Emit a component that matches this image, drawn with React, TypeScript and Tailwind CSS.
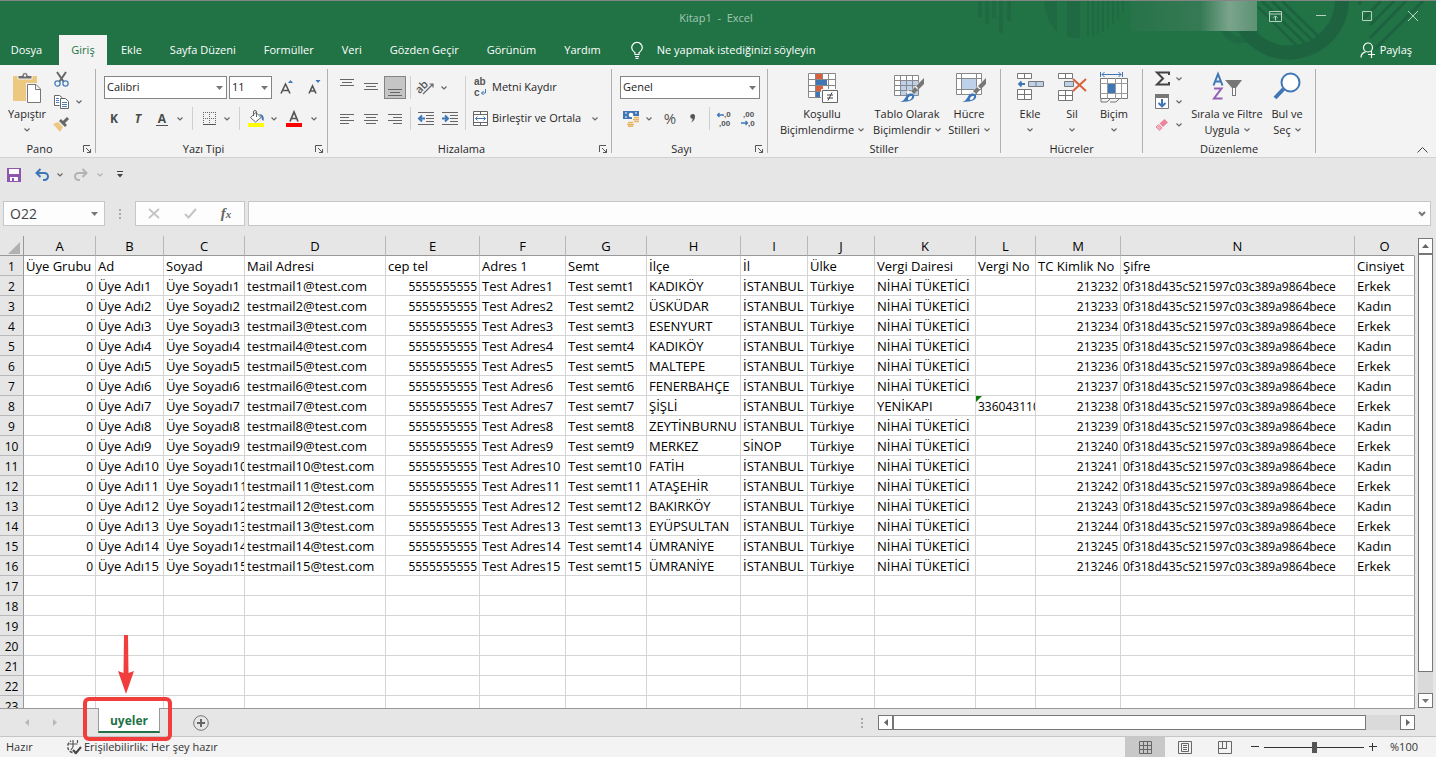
import type { ReactNode } from 'react';

const tabs = ['Ekle', 'Sayfa Düzeni', 'Formüller', 'Veri', 'Gözden Geçir', 'Görünüm', 'Yardım'];

const columns = [
  { letter: 'A', width: 'w-[72px]' },
  { letter: 'B', width: 'w-[68px]' },
  { letter: 'C', width: 'w-[81px]' },
  { letter: 'D', width: 'w-[141px]' },
  { letter: 'E', width: 'w-[94px]' },
  { letter: 'F', width: 'w-[86px]' },
  { letter: 'G', width: 'w-[81px]' },
  { letter: 'H', width: 'w-[94px]' },
  { letter: 'I', width: 'w-[67px]' },
  { letter: 'J', width: 'w-[67px]' },
  { letter: 'K', width: 'w-[101px]' },
  { letter: 'L', width: 'w-[60px]' },
  { letter: 'M', width: 'w-[85px]' },
  { letter: 'N', width: 'w-[234px]' },
  { letter: 'O', width: 'w-[60px]' },
];

const titles = [
  'Üye Grubu', 'Ad', 'Soyad', 'Mail Adresi', 'cep tel', 'Adres 1', 'Semt', 'İlçe', 'İl', 'Ülke',
  'Vergi Dairesi', 'Vergi No', 'TC Kimlik No', 'Şifre', 'Cinsiyet',
];

const districts = [
  'KADIKÖY', 'ÜSKÜDAR', 'ESENYURT', 'KADIKÖY', 'MALTEPE', 'FENERBAHÇE', 'ŞİŞLİ', 'ZEYTİNBURNU',
  'MERKEZ', 'FATİH', 'ATAŞEHİR', 'BAKIRKÖY', 'EYÜPSULTAN', 'ÜMRANİYE', 'ÜMRANİYE',
];

const members = districts.map((district, i) => {
  const n = i + 1;
  return [
    '0',
    `Üye Adı${n}`,
    `Üye Soyadı${n}`,
    `testmail${n}@test.com`,
    '5555555555',
    `Test Adres${n}`,
    `Test semt${n}`,
    district,
    district === 'MERKEZ' ? 'SİNOP' : 'İSTANBUL',
    'Türkiye',
    n === 7 ? 'YENİKAPI' : 'NİHAİ TÜKETİCİ',
    n === 7 ? '3360431101' : '',
    String(213231 + n),
    '0f318d435c521597c03c389a9864bece',
    n % 2 ? 'Erkek' : 'Kadın',
  ];
});

const rows = [titles, ...members, ...Array.from({ length: 7 }, () => titles.map(() => ''))];

function cellStyle(row: number, col: number) {
  if (row === 0) return 'text-[13px] text-left';
  if (col === 0 || col === 4 || col === 12) return 'text-[12px] text-right';
  if (col === 11 || col === 13) return 'text-[12px] text-left';
  return 'text-[13px] text-left';
}

function Svg({ w, h, children }: { w: number; h: number; children: ReactNode }) {
  return (
    <svg width={w} height={h} viewBox={`0 0 ${w} ${h}`} fill="none" className="shrink-0 overflow-visible" aria-hidden="true">
      {children}
    </svg>
  );
}

function Chevron({ color = '#666' }: { color?: string }) {
  return (
    <Svg w={6} h={4}>
      <path d="M.5.5L3 3 5.500.5" stroke={color} strokeWidth="1.200" />
    </Svg>
  );
}

function Triangle() {
  return (
    <Svg w={7} h={4}>
      <path d="M0 0h7L3.5 4z" fill="#777" />
    </Svg>
  );
}

function DropButton({ label }: { label: string }) {
  return (
    <button aria-label={label} className="flex h-full w-3 items-center justify-center">
      <Chevron />
    </button>
  );
}

function Tool({ label, width = 'w-6', children }: { label: string; width?: string; children: ReactNode }) {
  return (
    <button aria-label={label} className={`flex h-full shrink-0 items-center justify-center ${width}`}>
      {children}
    </button>
  );
}

function BigButton({ width, icon, line1, line2 }: { width: string; icon: ReactNode; line1: string; line2?: string }) {
  return (
    <button className={`flex shrink-0 flex-col items-center whitespace-nowrap leading-4 ${width}`}>
      <span className="flex h-8 items-start justify-center">{icon}</span>
      <span className="mt-0.5">{line1}</span>
      <span className="flex h-4 items-center gap-1">
        {line2}
        <Chevron />
      </span>
    </button>
  );
}

function Group({ name, width, launcher, children }: { name: string; width: string; launcher?: boolean; children: ReactNode }) {
  return (
    <>
      <section aria-label={name} className={`flex shrink-0 flex-col justify-between ${width}`}>
        {children}
        <div className="flex h-4 items-center">
          <span className="flex-1 text-center leading-4">{name}</span>
          {launcher && (
            <button aria-label={`${name} ayarları`} className="flex w-4 justify-center">
              <Svg w={9} h={9}>
                <path d="M.5 7V.5H7M3 3l4.5 4.500M7.500 4v3.500H4" stroke="#555" />
              </Svg>
            </button>
          )}
        </div>
      </section>
      <div className="mt-1 h-[84px] w-px shrink-0 bg-[#b1b1b1]" />
    </>
  );
}

function Divider({ className }: { className: string }) {
  return <div className={`w-px shrink-0 self-stretch bg-[#d0d0d0] ${className}`} />;
}

function Lines({ y, widths, align }: { y: number; widths: number[]; align: 'left' | 'center' | 'right' }) {
  return (
    <Svg w={15} h={20}>
      {widths.map((w, i) => {
        const x = align === 'left' ? 0 : align === 'right' ? 14 - w : (14 - w) / 2;
        return <rect key={i} x={x} y={y + i * 3} width={w} height="1" fill="#666" />;
      })}
    </Svg>
  );
}

function TitleArt() {
  return (
    <svg
      width="476"
      height="64"
      viewBox="0 1 476 64"
      fill="none"
      aria-hidden="true"
      className="pointer-events-none absolute top-0 right-0"
    >
      <g fill="#1f6a43">
        <path d="M18 1h4v16h-4zM25 1h4v23h-4zM32 1h4v17h-4zM39 1h4v32h-4zM47 1h4v20h-4z" />
        <path d="M84 1h13v31c-7-7-12-18-13-31zM107 1h13v37c-5 0-9-1-13-2zM127 1h2v36h-2zM132 1h2v35h-2zM137 1h2v33h-2zM142 1h2v31h-2zM147 1h2v27h-2zM152 1h2v23h-2zM157 1h2v18h-2zM162 1h2v13h-2z" />
      </g>
      <path d="M265 30a17 17 0 0 0 31 0" stroke="#1f6a43" strokeWidth="7" />
      <path d="M281 22a53 53 0 0 0 101-21" stroke="#1e6340" strokeWidth="14" />
      <path
        d="M298 7l40 40M302 1l45 44M312 1l41 40M322 1l36 35M401 1l-2 4M421 1l-18 18M434 1l-24 24M446 1l-36 37M463 1l-48 48"
        stroke="#1e6340"
        strokeWidth="3"
      />
      <defs>
        <linearGradient id="account" x1="171" x2="297" y1="0" y2="0" gradientUnits="userSpaceOnUse">
          <stop offset="0" stopColor="#27734a" />
          <stop offset=".55" stopColor="#357a54" />
          <stop offset=".78" stopColor="#7aa48c" />
          <stop offset="1" stopColor="#5c9274" />
        </linearGradient>
      </defs>
      <rect x="171" y="1" width="126" height="30" fill="url(#account)" />
    </svg>
  );
}

function TitleBar() {
  return (
    <header className="relative shrink-0 border-t border-[#848484] bg-[#217346] text-white">
      <TitleArt />
      <div className="relative flex h-[34px] items-start">
        <div className="w-[180px] shrink-0" />
        <h1 className="flex-1 self-center text-center whitespace-pre text-[#a3c7b1]">{'Kitap1  -  Excel'}</h1>
        <div className="flex h-[30px] text-[#b5d1c0]">
          <Tool label="Şerit Görüntüleme Seçenekleri" width="w-[46px]">
            <Svg w={13} h={11}>
              <path d="M.5.5h12v10H.5zM.5 3h12M6.5 9.500V5M4.500 6.800l2-2 2 2" stroke="currentColor" />
            </Svg>
          </Tool>
          <Tool label="Simge Durumuna Küçült" width="w-[46px]">
            <Svg w={10} h={10}>
              <path d="M0 4.500h10" stroke="currentColor" />
            </Svg>
          </Tool>
          <Tool label="Ekranı Kapla" width="w-[46px]">
            <Svg w={10} h={10}>
              <path d="M.5.5h9v9h-9z" stroke="currentColor" />
            </Svg>
          </Tool>
          <Tool label="Kapat" width="w-[46px]">
            <Svg w={10} h={10}>
              <path d="M0 0l10 10M10 0L0 10" stroke="currentColor" />
            </Svg>
          </Tool>
        </div>
      </div>
      <nav className="relative flex h-[30px] items-stretch">
        <button className="w-[59px] shrink-0 pr-1.5">Dosya</button>
        <button className="w-12 shrink-0 bg-[#f3f3f3] text-[#217346]">Giriş</button>
        {tabs.map((tab) => (
          <button key={tab} className="shrink-0 px-[14px] whitespace-nowrap">
            {tab}
          </button>
        ))}
        <label className="ml-4 flex flex-1 items-center gap-3.5">
          <Svg w={12} h={17}>
            <path d="M4 12.500v-1.700C2.500 9.600.7 8.300.7 5.700a5.300 5.300 0 0 1 10.600 0c0 2.600-1.800 3.900-3.300 5.100v1.700zM4 14.500h4M4.500 16.300h3" stroke="#fff" strokeWidth="1.200" />
          </Svg>
          <input
            aria-label="Ne yapmak istediğinizi söyleyin"
            placeholder="Ne yapmak istediğinizi söyleyin"
            className="w-[200px] bg-transparent text-white outline-none placeholder:text-white"
          />
        </label>
        <button className="flex items-center gap-1 pr-6">
          <Svg w={16} h={16}>
            <circle cx="8" cy="5.500" r="4.500" stroke="#fff" strokeWidth="1.200" />
            <path d="M1 15.500c0-3 2-4.800 4.500-5.600M8 12.500h7M11.500 9v7" stroke="#fff" strokeWidth="1.200" />
          </Svg>
          Paylaş
        </button>
      </nav>
    </header>
  );
}

function ClipboardGroup() {
  return (
    <Group name="Pano" width="w-[95px]" launcher>
      <div className="flex pl-1.5">
        <div className="flex pt-[7px]">
          <BigButton
            width="w-[42px]"
            line1="Yapıştır"
            icon={
              <Svg w={24} h={31}>
                <path d="M-2 4h24v25H-2z" fill="#ecc880" />
                <path d="M3 7V3.500h4a3 3 0 0 1 6 0h4V7z" fill="#6d6d6d" stroke="#f3f3f3" />
                <circle cx="10" cy="3.500" r="1.200" fill="#f3f3f3" />
                <path d="M12.500 12.500h8.500l4.500 4.500v13.500h-13z" fill="#fff" stroke="#f3f3f3" strokeWidth="3" />
                <path d="M12.500 12.500h8.500l4.500 4.500v13.500h-13zM20.500 13v4.500h5" fill="#fff" stroke="#777" />
              </Svg>
            }
          />
        </div>
        <div className="flex flex-col pt-0.5 pl-px">
          <div className="flex h-[23px]">
            <Tool label="Kes">
              <Svg w={15} h={16}>
                <path d="M3 1l6.500 9.500M12 1L5.500 10.500" stroke="#666" strokeWidth="2" />
                <circle cx="3.500" cy="12.500" r="2.600" stroke="#4a7fba" strokeWidth="1.300" />
                <circle cx="11.500" cy="12.500" r="2.600" stroke="#4a7fba" strokeWidth="1.300" />
              </Svg>
            </Tool>
          </div>
          <div className="flex h-[23px]">
            <Tool label="Kopyala">
              <Svg w={15} h={14}>
                <path d="M5.500 10.500h-5V.5h5l2.500 2v1" fill="#fff" stroke="#666" />
                <path d="M6.500 3.500h5l3 3v7h-8z" fill="#fff" stroke="#666" />
                <path d="M2 3.500h3M2 5.500h3M2 7.500h3M8 7.500h5M8 9.500h5M8 11.500h5" stroke="#4a7fba" />
              </Svg>
            </Tool>
            <DropButton label="Kopyalama seçenekleri" />
          </div>
          <div className="flex h-[23px]">
            <Tool label="Biçim Boyacısı">
              <Svg w={16} h={15}>
                <path d="M0 7l5-2 5 5-3 5z" fill="#ecc880" />
                <path d="M6 4l2-2 6 6-2 2z" fill="#666" />
                <path d="M10.500 5.500L15 1" stroke="#666" strokeWidth="3" />
              </Svg>
            </Tool>
          </div>
        </div>
      </div>
    </Group>
  );
}

function Picker({ label, value, width }: { label: string; value: string; width: string }) {
  return (
    <div className={`grid shrink-0 items-center ${width}`}>
      <select
        aria-label={label}
        className="col-start-1 row-start-1 h-[23px] w-full appearance-none border border-[#848484] bg-white pl-0.5 text-[#222] outline-none"
      >
        <option>{value}</option>
      </select>
      <span className="pointer-events-none col-start-1 row-start-1 mr-1 justify-self-end">
        <Triangle />
      </span>
    </div>
  );
}

function FontGroup() {
  return (
    <Group name="Yazı Tipi" width="w-[231px]" launcher>
      <div className="flex flex-col gap-2 pt-[11px] pl-2">
        <div className="flex h-[23px] items-center gap-0.5">
          <Picker label="Yazı tipi" value="Calibri" width="w-[123px]" />
          <Picker label="Yazı tipi boyutu" value="11" width="w-[43px]" />
          <Tool label="Yazı Tipini Büyüt" width="w-[26px]">
            <Svg w={14} h={15}>
              <path d="M1 13.500L5.500 4 10 13.500M2.500 10.500h6" stroke="#555" strokeWidth="1.600" />
              <path d="M8 3l2.500-3L13 3z" fill="#3f76b5" />
            </Svg>
          </Tool>
          <Tool label="Yazı Tipini Küçült">
            <Svg w={13} h={15}>
              <path d="M1 13.500L4.500 6 8 13.500M2 11h5" stroke="#555" strokeWidth="1.600" />
              <path d="M7.500 0h5L10 3z" fill="#3f76b5" />
            </Svg>
          </Tool>
        </div>
        <div className="-ml-0.5 flex h-[23px] items-center font-bold text-[#4a4a4a]">
          <Tool label="Kalın">
            <span className="text-[12px]">K</span>
          </Tool>
          <Tool label="İtalik">
            <span className="text-[12px] italic">T</span>
          </Tool>
          <Tool label="Altı Çizili">
            <span className="border-b border-[#555] px-0.5 text-[12px] leading-[13px]">A</span>
          </Tool>
          <DropButton label="Altı çizili seçenekleri" />
          <Divider className="mr-1 ml-1.5" />
          <Tool label="Kenarlıklar">
            <Svg w={13} h={14}>
              <path d="M.5 0v12M6.5 0v12M12.500 0v12M0 .5h13M0 6.500h13" stroke="#666" strokeDasharray="1 1" />
              <path d="M0 12.500h13" stroke="#555" />
            </Svg>
          </Tool>
          <DropButton label="Kenarlık seçenekleri" />
          <Divider className="mr-1 ml-1.5" />
          <Tool label="Dolgu Rengi">
            <Svg w={16} h={17}>
              <path d="M2.500 7.500L8 2.500l5 5-5.500 4.500z" fill="#fff" stroke="#666" />
              <path d="M5.500 6V2a1.500 1.500 0 0 1 3 0v5" stroke="#666" />
              <path d="M11 4c4 0 5.500 3 4.500 7-1.500-1-2-2-2-4z" fill="#3f76b5" />
              <path d="M0 13h16v4H0z" fill="#ff0" />
            </Svg>
          </Tool>
          <DropButton label="Dolgu seçenekleri" />
          <Tool label="Yazı Tipi Rengi" width="w-7">
            <Svg w={16} h={17}>
              <path d="M4 11.500L8 2l4 9.500M5 8.500h6" stroke="#555" strokeWidth="1.700" />
              <path d="M0 13h16v4H0z" fill="#f00" />
            </Svg>
          </Tool>
          <DropButton label="Yazı rengi seçenekleri" />
        </div>
      </div>
    </Group>
  );
}

function AlignGroup() {
  return (
    <Group name="Hizalama" width="w-[283px]" launcher>
      <div className="flex pt-[11px]">
        <div className="flex flex-col gap-2 pl-[7px]">
          <div className="flex h-[23px]">
            <Tool label="Üste Hizala">
              <Lines y={1} widths={[14, 10, 14]} align="center" />
            </Tool>
            <Tool label="Ortaya Hizala">
              <Lines y={5} widths={[14, 10, 14]} align="center" />
            </Tool>
            <button aria-label="Alta Hizala" aria-pressed="true" className="mx-px flex w-[22px] items-center justify-center border border-[#848484] bg-[#c5c5c5]">
              <Lines y={11} widths={[14, 10, 14]} align="center" />
            </button>
            <Divider className="mx-[3px]" />
            <Tool label="Yönlendirme">
              <Svg w={17} h={15}>
                <text x="-2" y="10" fontSize="11" fontWeight="600" fill="#555" transform="rotate(-45 5 8)">
                  ab
                </text>
                <path d="M5 14L15 4M11.500 4H15v3.500" stroke="#666" strokeWidth="1.200" />
              </Svg>
            </Tool>
            <DropButton label="Yönlendirme seçenekleri" />
          </div>
          <div className="flex h-[23px]">
            <Tool label="Sola Hizala">
              <Lines y={5} widths={[14, 9, 14, 9]} align="left" />
            </Tool>
            <Tool label="Ortala">
              <Lines y={5} widths={[14, 10, 14, 10]} align="center" />
            </Tool>
            <Tool label="Sağa Hizala">
              <Lines y={5} widths={[14, 9, 14, 9]} align="right" />
            </Tool>
            <Divider className="mx-[3px]" />
            <Tool label="Girintiyi Azalt">
              <Svg w={16} h={13}>
                <path d="M0 .5h16M8 3.500h8M8 6.500h8M8 9.500h8M0 12.500h16" stroke="#666" />
                <path d="M7 6.500H1.500M4 3.500l-3 3 3 3" stroke="#3f76b5" strokeWidth="2" />
              </Svg>
            </Tool>
            <Tool label="Girintiyi Artır">
              <Svg w={16} h={13}>
                <path d="M0 .5h16M8 3.500h8M8 6.500h8M8 9.500h8M0 12.500h16" stroke="#666" />
                <path d="M0 6.500h5.500M3 3.500l3 3-3 3" stroke="#3f76b5" strokeWidth="2" />
              </Svg>
            </Tool>
          </div>
        </div>
        <Divider className="ml-[3px]" />
        <div className="flex flex-1 flex-col gap-2 pl-[7px]">
          <button className="flex h-[23px] items-center gap-1">
            <Svg w={15} h={17}>
              <g fontFamily="Liberation Sans, sans-serif" fontSize="10" fontWeight="700" fill="#555">
                <text x="1" y="6">ab</text>
                <text x="1" y="17">c</text>
              </g>
              <path d="M12.500 10v4H8.500M10.500 12l-2 2 2 2" stroke="#3f76b5" />
            </Svg>
            Metni Kaydır
          </button>
          <div className="flex h-[23px]">
            <button className="flex items-center gap-1">
              <Svg w={15} h={15}>
                <path d="M.5.5h14v14H.5z" fill="#fff" />
                <path d="M.5.5h14v14H.5zM0 3.500h15M0 11.500h15M7.500 0v3.500M7.500 11.500V15" stroke="#666" />
                <path d="M2.500 7.500h10M4.500 5.500l-2 2 2 2M10.500 5.500l2 2-2 2" stroke="#3f76b5" />
              </Svg>
              Birleştir ve Ortala
            </button>
            <div className="mr-2.5 ml-auto flex">
              <DropButton label="Birleştirme seçenekleri" />
            </div>
          </div>
        </div>
      </div>
    </Group>
  );
}

function NumberGroup() {
  return (
    <Group name="Sayı" width="w-[155px]" launcher>
      <div className="flex flex-col gap-2 pt-[11px] pl-[7px]">
        <div className="pl-px">
          <Picker label="Sayı biçimi" value="Genel" width="w-[140px]" />
        </div>
        <div className="flex h-[23px] text-[#555]">
          <Tool label="Finansal Sayı Biçimi">
            <Svg w={17} h={17}>
              <path d="M0 1h16v8H0z" fill="#3f76b5" />
              <path d="M2 3h2M12 3h2M2 7h2" stroke="#fff" />
              <circle cx="8" cy="5" r="2.300" fill="#fff" />
              <path d="M9 6h8v7H9zM4 11h8v5H4z" fill="#f3f3f3" />
              <path d="M11 7.500h5M10 9.500h6M11 11.500h5M5 12.500h5M4 14.500h7M5 16.300h5" stroke="#e6b566" strokeWidth="1.500" />
            </Svg>
          </Tool>
          <DropButton label="Para birimi seçenekleri" />
          <Tool label="Yüzde Stili" width="w-[30px]">
            <span className="text-[15px]">%</span>
          </Tool>
          <Tool label="Virgül Stili" width="w-4">
            <Svg w={6} h={9}>
              <path d="M2.500 0A2.300 2.300 0 0 1 5 2.500C5 5.500 3.500 7.500 1 8.500c1-1.200 1.600-2.400 1.700-3.700A2.300 2.300 0 0 1 2.500 0z" fill="#555" />
            </Svg>
          </Tool>
          <Divider className="mr-0.5 ml-2" />
          <Tool label="Ondalık Artır">
            <Svg w={16} h={16}>
              <g fontFamily="Liberation Sans, sans-serif" fontSize="8" fontWeight="700" fill="#555">
                <text x="8" y="6">,0</text>
                <text x="3" y="15">,00</text>
              </g>
              <path d="M8 4H1.500M3.500 2l-2 2 2 2" stroke="#3f76b5" strokeWidth="1.300" />
            </Svg>
          </Tool>
          <Tool label="Ondalık Azalt">
            <Svg w={16} h={16}>
              <g fontFamily="Liberation Sans, sans-serif" fontSize="8" fontWeight="700" fill="#555">
                <text x="3" y="6">,00</text>
                <text x="8" y="15">,0</text>
              </g>
              <path d="M1 12h6.500M5.500 10l2 2-2 2" stroke="#3f76b5" strokeWidth="1.300" />
            </Svg>
          </Tool>
        </div>
      </div>
    </Group>
  );
}

function Brush() {
  return (
    <>
      <path d="M30 7L16 22l-3-3" stroke="#f3f3f3" strokeWidth="3" />
      <path d="M30 6v6l-5 5-3-3z" fill="#777" />
      <path d="M21 15l3 3-4 4-3-3z" fill="#777" />
      <path d="M6 30c4-1 5-4 7-7 2-2 5-2 7 0 1 4-2 7-14 7z" fill="#3f76b5" />
      <path d="M14 28c0-3 1-4 4-4 0 2-1 4-4 4z" fill="#fff" />
    </>
  );
}

function StylesGroup() {
  return (
    <Group name="Stiller" width="w-[232px]">
      <div className="flex pt-[7px] pl-2">
        <BigButton
          width="w-[92px]"
          line1="Koşullu"
          line2="Biçimlendirme"
          icon={
            <Svg w={28} h={31}>
              <path d="M.5 1.500h27v24H.5z" fill="#fff" />
              <path d="M8 2h6v5H8zM8 14h7v5H8z" fill="#d9603b" />
              <path d="M8 8h11v5H8zM8 20h4v5H8z" fill="#3f76b5" />
              <path d="M.5 1.500h27v24H.5zM0 7.500h28M0 13.500h28M0 19.500h28M7.500 1v25M14.500 1v6M20.500 1v25" stroke="#888" />
              <path d="M13 17h17v14H13z" fill="#f3f3f3" />
              <path d="M14.500 18.500h15v12h-15z" fill="#fff" stroke="#666" />
              <path d="M19 23h6M19 26h6M24 20.500l-4 8" stroke="#444" />
            </Svg>
          }
        />
        <BigButton
          width="w-[78px]"
          line1="Tablo Olarak"
          line2="Biçimlendir"
          icon={
            <Svg w={26} h={31}>
              <path d="M.5 3.500h24v20H.5z" fill="#fff" />
              <path d="M6 8h18v15H6z" fill="#bdd2ea" />
              <path d="M.5 3.500h24v20H.5zM0 8.500h25M0 13.500h25M0 18.500h25M6.500 3v21M12.500 3v21M18.500 3v21" stroke="#888" />
              <Brush />
            </Svg>
          }
        />
        <BigButton
          width="w-[46px]"
          line1="Hücre"
          line2="Stilleri"
          icon={
            <Svg w={26} h={31}>
              <path d="M.5 1.500h25v21H.5z" fill="#fff" />
              <path d="M6 6h14v11H6z" fill="#bdd2ea" />
              <path d="M.5 1.500h25v21H.5zM0 6.500h26M0 17.500h26M5.500 1v22M20.500 1v22" stroke="#888" />
              <Brush />
            </Svg>
          }
        />
      </div>
    </Group>
  );
}

function CellsGroup() {
  return (
    <Group name="Hücreler" width="w-[141px]">
      <div className="flex pt-[7px] pl-2">
        <BigButton
          width="w-[42px]"
          line1="Ekle"
          icon={
            <Svg w={27} h={29}>
              <path d="M.5 1.500h14v5H.5zM7.500 1.500v5M.5 17.500h14v10H.5zM7.500 17.500v10M.5 22.500h14" fill="#fff" stroke="#777" />
              <path d="M11.500 9.500h15v5h-15zM19 9.500v5" fill="#bdd2ea" stroke="#777" />
              <path d="M8 12H2M4.500 9.500L2 12l2.500 2.500" stroke="#3f76b5" strokeWidth="1.800" />
            </Svg>
          }
        />
        <BigButton
          width="w-[42px]"
          line1="Sil"
          icon={
            <Svg w={29} h={29}>
              <path d="M.5 1.500h14v5H.5zM7.500 1.500v5M.5 18.500h14v10H.5zM7.500 18.500v10M.5 23.500h14" fill="#fff" stroke="#777" />
              <path d="M6.500 9.500h9v5h-9z" fill="#bdd2ea" stroke="#777" />
              <path d="M15 7l13 12M28 7L15 19" stroke="#d9603b" strokeWidth="2" />
            </Svg>
          }
        />
        <BigButton
          width="w-[42px]"
          line1="Biçim"
          icon={
            <Svg w={29} h={32}>
              <path d="M.5 0v5M22.500 0v5M2 2.500h19M4.500 0L2 2.500 4.500 5M18.500 0L21 2.500 18.500 5" stroke="#3f76b5" />
              <path d="M.5 6.500h27v20H.5z" fill="#fff" stroke="#777" />
              <path d="M0 11.500h28M0 21.500h28M7.500 6v21M15.500 6v21M21.500 6v21" stroke="#999" />
              <path d="M8 12h7v9H8z" fill="#3f76b5" />
              <path d="M1 27v3h6l3-3M10 30h6l3-3" stroke="#777" />
            </Svg>
          }
        />
      </div>
    </Group>
  );
}

function EditGroup() {
  return (
    <Group name="Düzenleme" width="w-[172px]">
      <div className="flex pl-2">
        <div className="flex flex-col pt-0.5">
          <div className="flex h-[23px]">
            <Tool label="Otomatik Toplam" width="w-[22px]">
              <Svg w={15} h={15}>
                <path d="M14 4V1.500H2L8 7.500l-6 6h12V11" stroke="#444" strokeWidth="2" />
              </Svg>
            </Tool>
            <DropButton label="Toplam seçenekleri" />
          </div>
          <div className="flex h-[23px]">
            <Tool label="Doldur" width="w-[22px]">
              <Svg w={14} h={15}>
                <path d="M.5.5h13v14H.5z" fill="#fff" stroke="#777" />
                <path d="M0 0h14v4H0z" fill="#777" />
                <path d="M7 5v7M3.500 9L7 12.300 10.500 9" stroke="#3f76b5" strokeWidth="2" />
              </Svg>
            </Tool>
            <DropButton label="Doldurma seçenekleri" />
          </div>
          <div className="flex h-[23px]">
            <Tool label="Temizle" width="w-[22px]">
              <Svg w={14} h={14}>
                <path d="M4.500 5.500L9.500 1l3.500 3.500L8 9z" fill="#e8879b" />
                <path d="M3.500 6.500L7 10l-2.500 2.500L1 9z" fill="#f0b0be" stroke="#e8879b" />
              </Svg>
            </Tool>
            <DropButton label="Temizleme seçenekleri" />
          </div>
        </div>
        <div className="flex pt-[7px] pl-0.5">
          <BigButton
            width="w-20"
            line1="Sırala ve Filtre"
            line2="Uygula"
            icon={
              <Svg w={30} h={30}>
                <path d="M1.500 13.500L6 2l4.500 11.500M3 9.500h6" stroke="#3f76b5" strokeWidth="2" />
                <path d="M2 16.500h7.500L2 26.500h8.500" stroke="#9461b5" strokeWidth="2" />
                <path d="M13 8h17l-6 8v8h-4v-8z" fill="#777" />
                <path d="M21 16h2v7h-2z" fill="#fff" />
              </Svg>
            }
          />
          <BigButton
            width="w-10"
            line1="Bul ve"
            line2="Seç"
            icon={
              <Svg w={28} h={29}>
                <path d="M10.500 17L2 26" stroke="#3f76b5" strokeWidth="4" />
                <circle cx="17.500" cy="10.500" r="9" fill="#fff" stroke="#3f76b5" strokeWidth="2" />
              </Svg>
            }
          />
        </div>
      </div>
    </Group>
  );
}

function Ribbon() {
  return (
    <div className="flex h-[93px] shrink-0 border-b border-[#d2d2d2] bg-[#f3f3f3] text-[#262626]">
      <ClipboardGroup />
      <FontGroup />
      <AlignGroup />
      <NumberGroup />
      <StylesGroup />
      <CellsGroup />
      <EditGroup />
      <button aria-label="Şeridi Daralt" className="mr-2 mb-1 ml-auto self-end">
        <Svg w={11} h={6}>
          <path d="M.5 5.500l5-5 5 5" stroke="#444" />
        </Svg>
      </button>
    </div>
  );
}

function QuickAccess() {
  return (
    <div className="flex h-[33px] shrink-0 items-center pl-0.5">
      <Tool label="Kaydet">
        <Svg w={14} h={14}>
          <path d="M0 0h14v14H0z" fill="#8e56ad" />
          <path d="M2 1h10v5H2zM3 9h8v4H3z" fill="#fff" />
          <path d="M5 10h2v3H5z" fill="#8e56ad" />
        </Svg>
      </Tool>
      <div className="ml-1 flex items-center">
        <Tool label="Geri Al">
          <Svg w={14} h={13}>
            <path d="M1.500 5h8a3.500 3.500 0 0 1 0 7H8M5.500 1l-4 4 4 4" stroke="#3f76b5" strokeWidth="2" />
          </Svg>
        </Tool>
        <DropButton label="Geri alma listesi" />
      </div>
      <div className="ml-0.5 flex items-center">
        <Tool label="Yinele" width="w-[26px]">
          <Svg w={14} h={13}>
            <path d="M12.500 5h-8a3.500 3.500 0 0 0 0 7H6M8.500 1l4 4-4 4" stroke="#b3b3b3" strokeWidth="2" />
          </Svg>
        </Tool>
        <button aria-label="Yineleme listesi" className="flex w-3 justify-center">
          <Chevron color="#b3b3b3" />
        </button>
      </div>
      <div className="ml-0.5 flex">
        <Tool label="Hızlı Erişim Araç Çubuğunu Özelleştir">
          <Svg w={6} h={7}>
            <path d="M0 .5h6" stroke="#444" />
            <path d="M0 3h6L3 6.500z" fill="#444" />
          </Svg>
        </Tool>
      </div>
    </div>
  );
}

function Dots() {
  return (
    <Svg w={2} h={10}>
      <path d="M0 0h2v2H0zM0 4h2v2H0zM0 8h2v2H0z" fill="#aaa" />
    </Svg>
  );
}

function FormulaBar() {
  return (
    <div className="flex shrink-0 items-center py-2.5 pr-[5px] pl-[3px]">
      <div className="flex h-[25px] w-[102px] items-center border border-[#c6c6c6] bg-[#fdfdfd] pr-1.5">
        <input aria-label="Ad Kutusu" defaultValue="O22" className="w-full min-w-0 bg-transparent pl-1.5 text-[14px] text-[#444] outline-none" />
        <Triangle />
      </div>
      <div className="flex w-[30px] justify-center">
        <Dots />
      </div>
      <div className="flex h-[25px] w-[110px] items-center justify-around border border-[#c6c6c6] bg-[#fdfdfd]">
        <Tool label="İptal">
          <Svg w={12} h={11}>
            <path d="M1 1l10 9M11 1L1 10" stroke="#c4c4c4" strokeWidth="1.800" />
          </Svg>
        </Tool>
        <Tool label="Gir">
          <Svg w={13} h={11}>
            <path d="M1 6l3.500 3.500L12 1" stroke="#c4c4c4" strokeWidth="2" />
          </Svg>
        </Tool>
        <Tool label="İşlev Ekle">
          <span className="font-['Liberation_Serif',serif] text-[15px] font-bold text-[#666] italic">
            f<span className="text-[11px]">x</span>
          </span>
        </Tool>
      </div>
      <div className="ml-[3px] flex h-[25px] flex-1 items-center border border-[#c6c6c6] bg-[#fdfdfd] pr-1">
        <input aria-label="Formül Çubuğu" className="h-full flex-1 bg-transparent px-2 outline-none" />
        <Svg w={8} h={6}>
          <path d="M1 1l3 3 3-3" stroke="#777" strokeWidth="2" />
        </Svg>
      </div>
    </div>
  );
}

function Grid() {
  return (
    <div className="min-w-0 flex-1 overflow-hidden">
      <table className="w-0 table-fixed border-separate border-spacing-0 text-black">
        <colgroup>
          <col className="w-6" />
          {columns.map((c) => (
            <col key={c.letter} className={c.width} />
          ))}
        </colgroup>
        <thead>
          <tr>
            <th aria-label="Tümünü seç" className="h-5 border-r border-b border-[#999] bg-[#e6e6e6] p-0">
              <span className="flex justify-end pt-1 pr-[3px]">
                <Svg w={12} h={12}>
                  <path d="M12 0v12H0z" fill="#b1b1b1" />
                </Svg>
              </span>
            </th>
            {columns.map((c) => (
              <th
                key={c.letter}
                scope="col"
                className="h-5 border-r border-b border-r-[#b8b8b8] border-b-[#999] bg-[#e6e6e6] px-0 pt-0.5 pb-0 text-center text-[13px] leading-[17px] font-normal last:border-r-[#e6e6e6]"
              >
                {c.letter}
              </th>
            ))}
          </tr>
        </thead>
        <tbody>
          {rows.map((cells, r) => (
            <tr key={r}>
              <th
                scope="row"
                className="h-5 border-r border-b border-r-[#999] border-b-[#b8b8b8] bg-[#e6e6e6] px-0 pt-0.5 pb-0 text-center text-[12px] leading-[17px] font-normal"
              >
                {r + 1}
              </th>
              {cells.map((cell, c) => (
                <td
                  key={c}
                  className={`relative h-5 overflow-hidden border-r border-b border-[#d4d4d4] bg-white px-0.5 pt-0.5 pb-0 leading-[17px] whitespace-nowrap last:border-r-[#999] ${cellStyle(r, c)}`}
                >
                  {cell}
                  {c === 11 && cell !== '' && r > 0 && (
                    <span className="absolute top-0 left-0 border-t-[6px] border-r-[6px] border-t-[#0b7a0b] border-r-transparent" />
                  )}
                </td>
              ))}
            </tr>
          ))}
        </tbody>
      </table>
    </div>
  );
}

function VerticalScroll() {
  return (
    <div className="flex w-[18px] shrink-0 flex-col pt-0.5 pr-[3px]">
      <button aria-label="Yukarı kaydır" className="flex h-4 w-[15px] shrink-0 items-center justify-center border border-[#777] bg-white">
        <Svg w={7} h={4}>
          <path d="M0 4h7L3.500 0z" fill="#666" />
        </Svg>
      </button>
      <div className="flex flex-1 flex-col bg-[#dadada] pb-[21px]">
        <div className="flex-1 border border-[#777] bg-white" />
      </div>
      <button aria-label="Aşağı kaydır" className="flex h-[15px] w-[15px] shrink-0 items-center justify-center border border-[#777] bg-white">
        <Triangle />
      </button>
    </div>
  );
}

function SheetBar() {
  return (
    <div className="flex h-7 shrink-0 bg-[#e6e6e6]">
      <div className="flex w-[98px] shrink-0 items-center gap-6 border-t border-[#999] pl-[25px]">
        <button aria-label="Önceki sayfa">
          <Svg w={4} h={7}>
            <path d="M4 0v7L0 3.500z" fill="#b8b8b8" />
          </Svg>
        </button>
        <button aria-label="Sonraki sayfa">
          <Svg w={4} h={7}>
            <path d="M0 0v7l4-3.500z" fill="#b8b8b8" />
          </Svg>
        </button>
      </div>
      <div className="relative h-[25px] w-[62px] shrink-0">
        <button className="h-full w-full border-x border-b-2 border-x-[#999] border-b-[#217346] bg-white pt-[3px] text-[12px] font-bold text-[#217346]">
          uyeler
        </button>
        <div className="pointer-events-none absolute -top-[11px] -left-[15px] h-11 w-[89px] rounded-md border-4 border-[#f23d3d]" />
        <svg width="16" height="59" viewBox="0 0 16 59" aria-hidden="true" className="pointer-events-none absolute -top-[73px] left-5">
          <path d="M6 0h4l.5 38 5.500-2-8 23L0 36l5.500 2z" fill="#f23d3d" />
        </svg>
      </div>
      <div className="flex flex-1 items-center border-t border-[#999] pl-[33px]">
        <button aria-label="Yeni sayfa">
          <Svg w={16} h={16}>
            <circle cx="8" cy="8" r="7.300" stroke="#777" />
            <path d="M4 8h8M8 4v8" stroke="#666" strokeWidth="2" />
          </Svg>
        </button>
      </div>
      <div className="flex w-[555px] items-center gap-[15px] border-t border-[#999] pl-px">
        <Dots />
        <div className="flex h-[15px] flex-1 bg-[#dadada]">
          <button aria-label="Sola kaydır" className="flex w-[15px] items-center justify-center border border-[#777] bg-white">
            <Svg w={4} h={7}>
              <path d="M4 0v7L0 3.500z" fill="#666" />
            </Svg>
          </button>
          <div className="mr-[34px] flex-1 border border-[#777] bg-white" />
          <button aria-label="Sağa kaydır" className="flex w-[15px] items-center justify-center border border-[#777] bg-white">
            <Svg w={4} h={7}>
              <path d="M0 0v7l4-3.500z" fill="#666" />
            </Svg>
          </button>
        </div>
      </div>
      <div className="w-[21px] shrink-0" />
    </div>
  );
}

function StatusBar() {
  return (
    <footer className="flex h-[21px] shrink-0 items-center border-t border-[#c6c6c6] bg-[#f3f3f3] pl-1.5 text-[#333]">
      <span className="w-[59px]">Hazır</span>
      <button className="flex items-center gap-0.5">
        <Svg w={17} h={16}>
          <path d="M12 13a6 6 0 1 1-6-11" stroke="#555" strokeWidth="1.500" strokeDasharray="3 1.500" />
          <path d="M8 1v7M4.500 5h8M12.500 1v3M8 8l-2 3" stroke="#555" strokeWidth="1.200" />
          <path d="M8 11l3 3 5-6" stroke="#444" strokeWidth="2" />
        </Svg>
        Erişilebilirlik: Her şey hazır
      </button>
      <div className="ml-auto flex h-full items-center">
        <Tool label="Normal" width="w-10 bg-[#c8c8c8]">
          <Svg w={13} h={13}>
            <path d="M.5.5h12v12H.5zM0 4.500h13M0 8.500h13M4.500 0v13M8.500 0v13" stroke="#666" />
          </Svg>
        </Tool>
        <Tool label="Sayfa Düzeni" width="w-10">
          <Svg w={14} h={13}>
            <path d="M.5.5h13v12H.5zM3.500 2.500h7v8h-7zM5 4.500h4M5 6.500h4M5 8.500h4" stroke="#666" />
          </Svg>
        </Tool>
        <Tool label="Sayfa Sonu Önizleme" width="w-10">
          <Svg w={14} h={13}>
            <path d="M.5.5h13v12H.5zM0 7.500h9M4.500 0v7.500M8.500 0v7.500" stroke="#666" />
          </Svg>
        </Tool>
        <Tool label="Uzaklaştır" width="w-[19px]">
          <Svg w={8} h={8}>
            <path d="M0 3.500h8" stroke="#333" />
          </Svg>
        </Tool>
        <input
          type="range"
          aria-label="Yakınlaştırma"
          className="h-3 w-[100px] appearance-none bg-transparent bg-[linear-gradient(#333,#333)] bg-[length:100%_1px] bg-center bg-no-repeat [&::-webkit-slider-thumb]:h-[11px] [&::-webkit-slider-thumb]:w-[5px] [&::-webkit-slider-thumb]:appearance-none [&::-webkit-slider-thumb]:bg-[#555]"
        />
        <Tool label="Yakınlaştır" width="w-[18px]">
          <Svg w={8} h={8}>
            <path d="M0 3.500h8M3.500 0v8" stroke="#333" />
          </Svg>
        </Tool>
        <span className="w-[54px] pl-2">%100</span>
      </div>
    </footer>
  );
}

export default function App() {
  return (
    <div className="flex h-screen w-full flex-col overflow-hidden bg-[#e6e6e6] font-['Open_Sans','Noto_Sans',sans-serif] text-[11px]">
      <TitleBar />
      <Ribbon />
      <QuickAccess />
      <FormulaBar />
      <main className="flex min-h-0 flex-1">
        <Grid />
        <VerticalScroll />
      </main>
      <SheetBar />
      <StatusBar />
    </div>
  );
}
